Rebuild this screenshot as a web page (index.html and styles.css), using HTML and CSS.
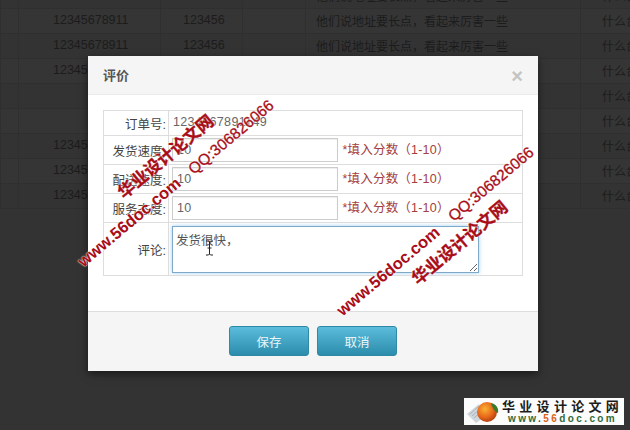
FILE: index.html
```html
<!DOCTYPE html>
<html lang="zh">
<head>
<meta charset="utf-8">
<title>评价</title>
<link rel="stylesheet" href="styles.css">
</head>
<body>
<table class="bg-table">
  <colgroup><col class="c1"><col class="c2"><col class="c3"><col class="c4"><col class="c5"><col class="c6"></colgroup>
  <tr><td></td><td class="num"></td><td class="pwd"></td><td></td><td class="addr">他们说地址要长点，看起来厉害一些</td><td class="tail">什么台</td></tr>
  <tr><td></td><td class="num">12345678911</td><td class="pwd">123456</td><td></td><td class="addr">他们说地址要长点，看起来厉害一些</td><td class="tail">什么台</td></tr>
  <tr><td></td><td class="num">12345678911</td><td class="pwd">123456</td><td></td><td class="addr">他们说地址要长点，看起来厉害一些</td><td class="tail">什么台</td></tr>
  <tr><td></td><td class="num">12345678911</td><td class="pwd">123456</td><td></td><td class="addr">他们说地址要长点，看起来厉害一些</td><td class="tail">什么台</td></tr>
  <tr><td></td><td></td><td></td><td></td><td></td><td class="tail">什么台</td></tr>
  <tr><td></td><td></td><td></td><td></td><td></td><td class="tail">什么台</td></tr>
  <tr><td></td><td class="num">12345678911</td><td class="pwd">123456</td><td></td><td class="addr">他们说地址要长点，看起来厉害一些</td><td class="tail">什么台</td></tr>
  <tr><td></td><td class="num">12345678911</td><td class="pwd">123456</td><td></td><td class="addr">他们说地址要长点，看起来厉害一些</td><td class="tail">什么台</td></tr>
  <tr><td></td><td class="num">12345678911</td><td class="pwd">123456</td><td></td><td class="addr">他们说地址要长点，看起来厉害一些</td><td class="tail">什么台</td></tr>
</table>

<div class="modal">
  <header class="modal-head">
    <h3 class="modal-title">评价</h3>
    <span class="modal-close">×</span>
  </header>
  <div class="modal-body">
    <table class="form-table">
      <colgroup><col class="f1"><col class="f2"><col class="f3"></colgroup>
      <tr class="row-order"><th>订单号:</th><td colspan="2" class="order-no">1234567891149</td></tr>
      <tr class="row-score"><th>发货速度:</th><td class="cell-input"><input class="score" type="text" value="10"></td><td class="hint">*填入分数（1-10）</td></tr>
      <tr class="row-score"><th>配送速度:</th><td class="cell-input"><input class="score" type="text" value="10"></td><td class="hint">*填入分数（1-10）</td></tr>
      <tr class="row-score"><th>服务态度:</th><td class="cell-input"><input class="score" type="text" value="10"></td><td class="hint">*填入分数（1-10）</td></tr>
      <tr class="row-comment"><th>评论:</th><td colspan="2" class="cell-input"><textarea class="comment">发货很快，</textarea></td></tr>
    </table>
  </div>
  <footer class="modal-foot">
    <button class="btn" type="button">保存</button>
    <button class="btn" type="button">取消</button>
  </footer>
</div>

<svg class="cursor" width="9" height="16" viewBox="0 0 9 16"><path d="M1 1h2.500l1 1 1-1H8M4.500 2v12M1 15h2.500l1-1 1 1H8M2.500 8h4" fill="none" stroke="#222" stroke-width="1"/></svg>

<div class="wm wm-cn wm-a">华业设计论文网</div>
<div class="wm wm-url wm-b">www.56doc.com</div>
<div class="wm wm-qq wm-c">QQ:306826066</div>
<div class="wm wm-qq wm-d">QQ:306826066</div>
<div class="wm wm-cn wm-e">华业设计论文网</div>
<div class="wm wm-url wm-f">www.56doc.com</div>

<div class="logo">
  <svg class="logo-icon" width="36" height="26" viewBox="0 0 36 26">
    <defs><radialGradient id="ball" cx="40%" cy="35%" r="70%"><stop offset="0" stop-color="#f9b233"/><stop offset=".6" stop-color="#e8661a"/><stop offset="1" stop-color="#a83a10"/></radialGradient></defs>
    <path d="M1 15 13 5l6 13-9 6z" fill="#cfd6dc"/>
    <path d="M4 15l9-8M6 17l9-8M8 19l9-8" stroke="#99a3ab" stroke-width=".7"/>
    <circle cx="21" cy="13" r="10" fill="url(#ball)"/>
    <path d="M25 4c5 1 8 5 7 10-3-1-6-5-7-10z" fill="#3c7a2e"/>
  </svg>
  <div class="logo-text">
    <div class="logo-cn">华业设计论文网</div>
    <div class="logo-url">www.<span class="logo-num">56</span>doc.com</div>
  </div>
</div>
</body>
</html>
```
FILE: styles.css
```css
* { box-sizing: border-box; }
html, body { margin: 0; padding: 0; width: 630px; height: 430px; overflow: hidden; }
body {
  background: #333333;
  font-family: "Liberation Sans", "Noto Sans CJK SC", sans-serif;
  font-size: 12.5px;
  position: relative;
}

.bg-table {
  border-collapse: collapse;
  table-layout: fixed;
  width: 640px;
  margin-top: -17px;
  color: #1c1c1c;
}
.bg-table td {
  height: 25px;
  padding: 0 0 2px 0;
  border: 1px solid #2f2f2f;
  white-space: nowrap;
  overflow: hidden;
}
.bg-table tr:nth-child(even) td { background: #353535; }
.c1 { width: 18px; }
.c2 { width: 142px; }
.c3 { width: 82px; }
.c4 { width: 63px; }
.c5 { width: 275px; }
.c6 { width: 60px; }
.bg-table .num { padding-left: 34px; }
.bg-table .pwd { padding-left: 22px; }
.bg-table .addr { padding-left: 10px; font-size: 12px; }
.bg-table .tail { padding-left: 21px; font-size: 12px; }

.modal {
  position: absolute;
  left: 88px;
  top: 56px;
  width: 450px;
  height: 315px;
  background: #fff;
  display: flex;
  flex-direction: column;
  box-shadow: 0 3px 8px rgba(0, 0, 0, .5);
}
.modal-head {
  height: 39px;
  flex: none;
  display: flex;
  align-items: center;
  justify-content: space-between;
  padding: 0 15px 2px;
  background: #f5f5f5;
  border-bottom: 1px solid #ececec;
}
.modal-title { margin: 0; font-size: 13px; font-weight: bold; color: #555; }
.modal-close { font-size: 20px; font-weight: bold; color: #c4c4c4; line-height: 1; position: relative; top: 2px; }

.modal-body { flex: 1; padding: 15px 16px 0 15px; }
.form-table {
  border-collapse: collapse;
  table-layout: fixed;
  width: 420px;
  color: #555;
}
.f1 { width: 65px; }
.f2 { width: 172px; }
.form-table th, .form-table td { border: 1px solid #dddddd; padding: 0; }
.form-table th { font-weight: normal; text-align: right; padding-right: 2px; color: #444; }
.form-table td.order-no { padding: 0 0 2px 4px; color: #666; letter-spacing: .35px; }
.row-order { height: 25px; }
.row-score { height: 29px; }
.row-comment { height: 53px; }
.form-table td.cell-input { padding: 2px 3px; }
.form-table td.hint {
  color: #a43c40;
  padding: 0 0 3px 2px;
  border-left: 0;
  letter-spacing: .2px;
  white-space: nowrap;
}
.form-table tr.row-score td.cell-input { border-right: 0; }

.score {
  display: block;
  width: 166px;
  height: 24px;
  margin: 0;
  padding: 0 4px;
  border: 1px solid #cccccc;
  font: 12.5px "Liberation Sans", sans-serif;
  letter-spacing: .3px;
  color: #666;
  background: #fff;
  box-shadow: inset 0 1px 1px rgba(0, 0, 0, .07);
}
.comment {
  display: block;
  width: 307px;
  height: 47px;
  margin: 0;
  padding: 3px 3px;
  border: 1px solid #7fa9c9;
  font: 12.5px "Liberation Sans", "Noto Sans CJK SC", sans-serif;
  color: #555;
  outline: 0;
  box-shadow: 0 0 4px rgba(82, 168, 236, .55);
}

.modal-foot {
  height: 60px;
  flex: none;
  display: flex;
  justify-content: center;
  align-items: flex-start;
  gap: 8px;
  padding-top: 14px;
  background: #f5f5f5;
  border-top: 1px solid #dddddd;
}
.btn {
  width: 80px;
  height: 30px;
  padding: 0;
  border: 1px solid #2f89a5;
  border-radius: 3px;
  background: linear-gradient(#5bbcdb, #2c8cab);
  color: #eaf6fa;
  font: 12.5px "Liberation Sans", "Noto Sans CJK SC", sans-serif;
}

.cursor { position: absolute; left: 205px; top: 240px; }

.wm {
  position: absolute;
  white-space: nowrap;
  font-weight: bold;
  color: #a80d18;
  line-height: 1;
  transform: translate(-50%, -50%) rotate(-40deg);
  text-shadow: 0 0 1px #fff, 0 0 2px #fff;
}
.wm-cn { font-size: 17px; -webkit-text-stroke: .3px #a80d18; }
.wm-url { font-size: 16.5px; }
.wm-qq { font-size: 15.500px; font-weight: normal; -webkit-text-stroke: .3px #a80d18; }
.wm-a { left: 166px; top: 157px; }
.wm-b { left: 129px; top: 222px; }
.wm-c { left: 231px; top: 137px; }
.wm-d { left: 491px; top: 184px; }
.wm-e { left: 460px; top: 243px; }
.wm-f { left: 388px; top: 271px; }

.logo {
  position: absolute;
  left: 464px;
  top: 398px;
  width: 160px;
  height: 27px;
  background: #fcfcfc;
  display: flex;
  align-items: center;
  padding-left: 2px;
}
.logo-icon { flex: none; }
.logo-text { margin-left: 0; text-align: center; }
.logo-cn { font-size: 13px; font-weight: bold; color: #1c1c1c; letter-spacing: 4.300px; line-height: 14px; white-space: nowrap; }
.logo-url { font-size: 10px; font-weight: bold; color: #2f6b3a; letter-spacing: 2.400px; line-height: 10px; white-space: nowrap; }
.logo-num { color: #d9621a; }
```
